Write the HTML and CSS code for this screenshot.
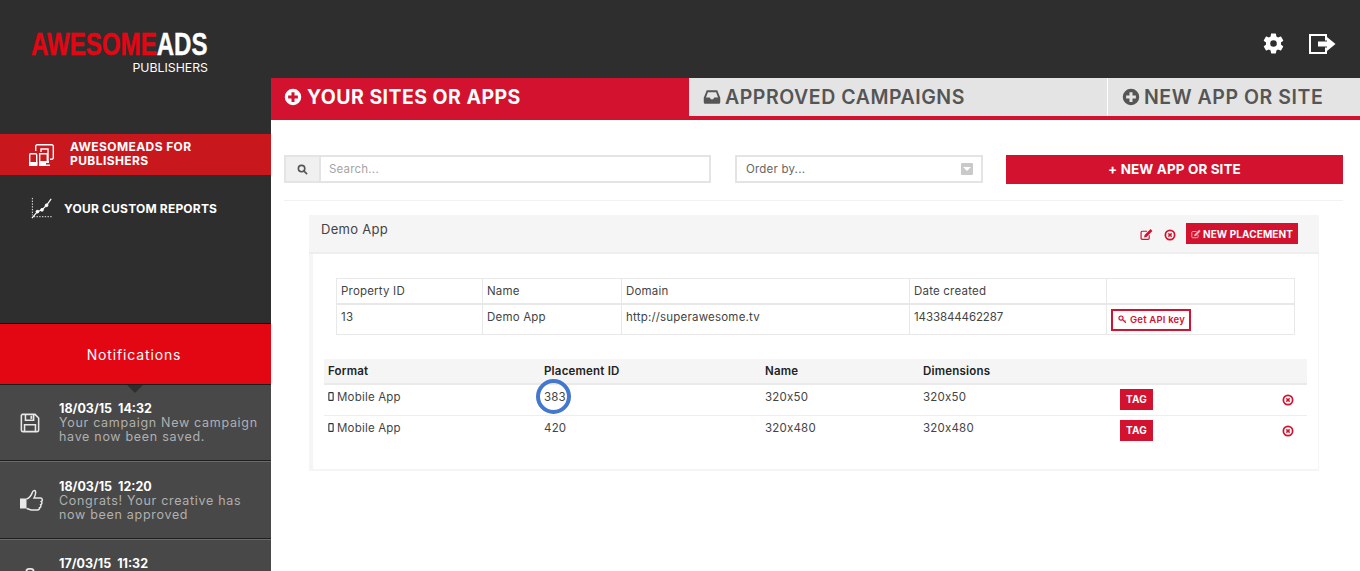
FILE: index.html
```html
<!DOCTYPE html>
<html lang="en">
<head>
<meta charset="utf-8">
<title>AwesomeAds Publishers</title>
<link rel="stylesheet" href="styles.css">
</head>
<body>
<svg class="defs" width="0" height="0" aria-hidden="true">
  <symbol id="i-plus-circle" viewBox="0 0 24 24"><path fill-rule="evenodd" d="M12 1a11 11 0 1 0 0 22 11 11 0 0 0 0-22zM10 5.500h4V10h4.500v4H14v4.500h-4V14H5.500v-4H10z"/></symbol>
  <symbol id="i-times-circle" viewBox="0 0 24 24"><path fill-rule="evenodd" d="M12 1a11 11 0 1 0 0 22 11 11 0 0 0 0-22zm0 3.500a7.500 7.500 0 1 1 0 15 7.500 7.500 0 0 1 0-15z"/><path d="M9.800 7.700 12 9.900l2.200-2.200 2.100 2.100-2.200 2.200 2.200 2.200-2.100 2.100-2.200-2.200-2.200 2.200-2.100-2.100 2.200-2.200-2.200-2.200z"/></symbol>
  <symbol id="i-edit" viewBox="0 0 24 24"><path d="M17 13.500V19a2 2 0 0 1-2 2H4a2 2 0 0 1-2-2V8a2 2 0 0 1 2-2h9" fill="none" stroke="currentColor" stroke-width="2.200"/><path d="M19.500 2 23 5.500 12 16.500l-4.500 1 1-4.500z"/></symbol>
  <symbol id="i-mobile" viewBox="0 0 12 20"><path fill-rule="evenodd" d="M2.500 0h7A2.500 2.500 0 0 1 12 2.500v15A2.500 2.500 0 0 1 9.500 20h-7A2.500 2.500 0 0 1 0 17.500v-15A2.500 2.500 0 0 1 2.500 0zM2.500 3v14h7V3z"/></symbol>
</svg>

<div class="app">
  <aside class="sidebar">
    <div class="brand">
      <div class="logo"><span class="logo-red">AWESOME</span><span class="logo-white">ADS</span></div>
      <div class="logo-sub">PUBLISHERS</div>
    </div>
    <nav class="side-nav">
      <a class="side-link active">
        <svg class="side-icon devices" viewBox="0 0 25 22" fill="none" stroke="#fff" stroke-width="1.400">
          <path d="M6.700 7V2.200A1.500 1.500 0 0 1 8.200.7h14.600a1.500 1.500 0 0 1 1.500 1.500v11.600a1.500 1.500 0 0 1-1.500 1.500H21"/>
          <path d="M12 8V5h7v12"/>
          <rect x=".7" y="9.700" width="7" height="11.600" rx="1"/>
          <path fill="#fff" stroke="none" d="M0 18h8.400v4H0zM10 17h10v2h-3v1.500h4V22h-11z"/>
          <path d="M10.700 9.700h7.600V18h-7.600z"/>
        </svg>
        <span>AWESOMEADS FOR<br>PUBLISHERS</span>
      </a>
      <a class="side-link reports">
        <svg class="side-icon chart" viewBox="0 0 24 24" fill="none" stroke="#fff">
          <path d="M1.500 1v19M3 21.500h20" stroke-dasharray="1.500 1.500" stroke-width="1"/>
          <path d="M1 23 7 16l5-2 5-5 5-7" stroke-width="1.300"/>
          <circle cx="7" cy="16" r="1.500" fill="#fff"/><circle cx="12" cy="14" r="1.500" fill="#fff"/><circle cx="17" cy="9" r="1.500" fill="#fff"/>
        </svg>
        <span>YOUR CUSTOM REPORTS</span>
      </a>
    </nav>
    <section class="notices">
      <h2 class="notices-title">Notifications</h2>
      <article class="notice">
        <svg class="notice-icon" viewBox="0 0 22 22" fill="none" stroke="#e8e8e8" stroke-width="1.700">
          <path d="M2.500 1.500h14l4 4V19a1.500 1.500 0 0 1-1.500 1.500H3A1.500 1.500 0 0 1 1.500 19V2.500z"/>
          <path d="M6 1.500V8h9V1.500M5 20.500V13h12v7.500"/>
          <path d="M11.500 3h2v3.500h-2z" fill="#e8e8e8" stroke="none"/>
        </svg>
        <div class="notice-text"><b>18/03/15&nbsp; 14:32</b><p>Your campaign New campaign have now been saved.</p></div>
      </article>
      <article class="notice">
        <svg class="notice-icon thumb" viewBox="0 0 24 22">
          <path fill="#e8e8e8" d="M0 9.500h6.500v10H0z"/>
          <path fill="none" stroke="#e8e8e8" stroke-width="1.500" d="M6.500 10c3-1 5-4 6-7 .3-1.500 2.500-2 3-.5.600 2-.5 4.500-1.500 6.500h6.500c2 0 2.500 3 .8 3.500 1 1 .6 3-.6 3.300.6 1.200 0 2.700-1.200 2.900.2 1.300-.6 2.300-2 2.300H11.500c-2 0-3-1.500-5-1.500"/>
        </svg>
        <div class="notice-text"><b>18/03/15&nbsp; 12:20</b><p>Congrats! Your creative has<br>now been approved</p></div>
      </article>
      <article class="notice">
        <svg class="notice-icon partial" viewBox="0 0 22 22" fill="none" stroke="#e8e8e8" stroke-width="2">
          <path d="M7 21V4a3 3 0 0 1 3-3h2a3 3 0 0 1 3 3v17"/>
        </svg>
        <div class="notice-text"><b>17/03/15&nbsp; 11:32</b></div>
      </article>
    </section>
  </aside>

  <main class="main">
    <header class="topbar">
      <svg class="top-icon gear" viewBox="0 0 24 24" fill="#fff"><path d="M19.140 12.940c.04-.3.06-.61.06-.94 0-.32-.02-.64-.07-.94l2.030-1.580a.49.49 0 0 0 .12-.61l-1.920-3.320a.488.488 0 0 0-.59-.22l-2.390.96c-.5-.38-1.030-.7-1.620-.94l-.36-2.540a.484.484 0 0 0-.48-.41h-3.840c-.24 0-.43.17-.47.41l-.36 2.540c-.59.24-1.130.57-1.620.94l-2.390-.96c-.22-.08-.47 0-.59.22L2.740 8.870c-.12.21-.08.47.12.61l2.030 1.580c-.05.3-.09.63-.09.94s.02.64.07.94l-2.030 1.580a.49.49 0 0 0-.12.61l1.920 3.320c.12.22.37.29.59.22l2.390-.96c.5.38 1.030.7 1.620.94l.36 2.540c.05.24.24.41.48.41h3.840c.24 0 .44-.17.47-.41l.36-2.540c.59-.24 1.130-.56 1.620-.94l2.390.96c.22.08.47 0 .59-.22l1.920-3.320c.12-.22.07-.47-.12-.61l-2.010-1.580zM12 15.200a3.200 3.200 0 1 1 0-6.400 3.200 3.200 0 0 1 0 6.400z"/></svg>
      <svg class="top-icon logout" viewBox="0 0 28 20" fill="#fff"><path d="M1 0h18v6.500h-2V2H3v16h14v-4.500h2V20H1z"/><path d="M10 7.500h9V3l8.500 7-8.500 7v-4.500h-9z"/></svg>
    </header>

    <nav class="tabs">
      <a class="tab tab-active"><svg class="tab-icon"><use href="#i-plus-circle"/></svg>YOUR SITES OR APPS</a>
      <a class="tab tab-mid">
        <svg class="tab-icon" viewBox="0 0 24 24"><path fill-rule="evenodd" d="M5 3h14l4 10v6a2 2 0 0 1-2 2H3a2 2 0 0 1-2-2v-6zm1.500 2.500L4 12.500h5l1.500 2.500h3l1.500-2.500h5l-2.500-7z"/></svg>APPROVED CAMPAIGNS</a>
      <a class="tab tab-last"><svg class="tab-icon"><use href="#i-plus-circle"/></svg>NEW APP OR SITE</a>
    </nav>

    <div class="content">
      <div class="toolbar">
        <div class="search">
          <span class="search-addon">
            <svg viewBox="0 0 24 24" fill="none" stroke="#555" stroke-width="3.500"><circle cx="10" cy="10" r="7"/><path d="m15.500 15.500 6.500 6.500"/></svg>
          </span>
          <span class="search-input">Search...</span>
        </div>
        <div class="order">
          <span>Order by...</span>
          <span class="order-caret"></span>
        </div>
        <a class="new-btn">+ NEW APP OR SITE</a>
      </div>

      <section class="panel">
        <header class="panel-head">
          <h3>Demo App</h3>
          <div class="panel-actions">
            <svg class="act-icon"><use href="#i-edit"/></svg>
            <svg class="act-icon"><use href="#i-times-circle"/></svg>
            <a class="placement-btn"><svg><use href="#i-edit"/></svg>NEW PLACEMENT</a>
          </div>
        </header>
        <div class="panel-body">
          <table class="prop-table">
            <colgroup><col class="p1"><col class="p2"><col class="p3"><col class="p4"><col></colgroup>
            <thead><tr><th>Property ID</th><th>Name</th><th>Domain</th><th>Date created</th><th></th></tr></thead>
            <tbody><tr>
              <td>13</td><td>Demo App</td><td>http://superawesome.tv</td><td class="stamp">1433844462287</td>
              <td><a class="key-btn">
                <svg viewBox="0 0 24 24" fill="none" stroke="currentColor" stroke-width="3"><circle cx="8" cy="8" r="5.500"/><path d="m12 12 9 9M17 17l3-2"/></svg>Get API key</a></td>
            </tr></tbody>
          </table>
          <table class="place-table">
            <colgroup><col class="c1"><col class="c2"><col class="c3"><col class="c4"><col class="c5"><col></colgroup>
            <thead><tr><th>Format</th><th>Placement ID</th><th>Name</th><th>Dimensions</th><th></th><th></th></tr></thead>
            <tbody>
              <tr>
                <td><svg class="mob"><use href="#i-mobile"/></svg>Mobile App</td>
                <td><span class="circled">383</span></td>
                <td>320x50</td><td>320x50</td>
                <td class="tag-cell"><a class="tag">TAG</a></td>
                <td class="del"><svg class="act-icon"><use href="#i-times-circle"/></svg></td>
              </tr>
              <tr>
                <td><svg class="mob"><use href="#i-mobile"/></svg>Mobile App</td>
                <td>420</td>
                <td>320x480</td><td>320x480</td>
                <td class="tag-cell"><a class="tag">TAG</a></td>
                <td class="del"><svg class="act-icon"><use href="#i-times-circle"/></svg></td>
              </tr>
            </tbody>
          </table>
        </div>
      </section>
    </div>
  </main>
</div>
</body>
</html>
```

FILE: styles.css
```css
*, *::before, *::after { box-sizing: border-box; }
html, body { margin: 0; height: 571px; overflow: hidden; }
body { font-family: Inter, "Liberation Sans", sans-serif; color: #333; background: #fff; }
.defs { position: absolute; }
a { display: block; }
h2, h3, p { margin: 0; font: inherit; }

.app { display: flex; height: 571px; overflow: hidden; }

/* sidebar */
.sidebar { width: 271px; flex: none; background: #2e2e2e; display: flex; flex-direction: column; height: 571px; overflow: hidden; }
.sidebar > * { flex: none; }
.brand { height: 134px; padding: 30px 0 0 31px; }
.logo { font-family: "Liberation Sans", sans-serif; font-weight: 700; font-size: 32px; line-height: 28px; white-space: nowrap; transform: scaleX(.752); transform-origin: 0 0; -webkit-text-stroke: .4px currentColor; }
.logo-red { color: #e30613; }
.logo-white { color: #fff; }
.logo-sub { width: 177px; text-align: right; color: #fff; font-size: 12.300px; line-height: 15px; margin-top: 2px; }
.side-nav { height: 189px; }
.side-link { display: flex; align-items: center; color: #fff; font-weight: 700; font-size: 12px; line-height: 14px; }
.side-link.active { height: 41px; background: #c9171e; padding: 0 0 0 29px; gap: 16px; letter-spacing: .4px; }
.side-link.active span { margin-top: -1px; }
.side-link.reports { height: 24px; margin-top: 21px; padding-left: 31px; gap: 11px; letter-spacing: .2px; }
.side-link.reports span { margin-top: 2px; }
.side-icon { flex: none; }
.devices { width: 25px; height: 22px; }
.chart { width: 22px; height: 22px; }

.notices { color: #fff; }
.notices-title { height: 62px; background: #e30613; border-top: 1px solid #111; border-bottom: 1px solid #1d1d1d; padding-right: 3px; text-align: center; font-size: 14px; line-height: 61px; letter-spacing: .85px; font-weight: 400; position: relative; }
.notices-title::after { content: ""; position: absolute; left: 127px; bottom: -9px; width: 16px; height: 8px; border: 8px solid transparent; border-bottom: 0; border-top-color: #2e2e2e; }
.notice { height: 78px; background: #484848; border-bottom: 1px solid #1f1f1f; border-top: 1px solid #6a6a6a; display: flex; align-items: center; padding-left: 20px; gap: 19px; }
.notice:first-of-type { height: 76px; border-top: 0; }
.notice-icon { width: 20px; height: 20px; flex: none; }
.notice-icon.thumb { width: 24px; height: 22px; margin-right: -4px; }
.notice-text { width: 205px; align-self: flex-start; margin-top: 17px; font-size: 12.500px; line-height: 14px; }
.notice:nth-of-type(2) .notice-text { margin-top: 18px; }
.notice-text b { display: block; font-weight: 700; font-size: 12.500px; }
.notice-text p { color: #b0b0b0; letter-spacing: .7px; }

/* main */
.main { flex: 1; min-width: 0; display: flex; flex-direction: column; }
.topbar { height: 78px; flex: none; background: #2e2e2e; display: flex; justify-content: flex-end; align-items: center; gap: 22px; padding: 9px 24px 0 0; }
.gear { width: 25px; height: 25px; }
.logout { width: 28px; height: 20px; }

.tabs { height: 42px; flex: none; display: flex; border-bottom: 4px solid #d2122e; background: #d2122e; }
.tab { display: flex; align-items: center; font-weight: 600; font-size: 19.500px; white-space: nowrap; height: 38px; }
.tab-icon { width: 18px; height: 18px; flex: none; margin-right: 4px; fill: currentColor; }
.tab-active { width: 417px; padding-left: 13px; color: #fff; background: #d2122e; font-weight: 700; letter-spacing: .45px; }
.tab-active .tab-icon { margin-right: 5px; }
.tab-mid { width: 418px; margin-left: 1px; padding-left: 14px; color: #555; background: #e4e4e4; letter-spacing: .55px; }
.tab-last { flex: 1; border-left: 1px solid #fff; padding-left: 14px; color: #555; background: #e4e4e4; letter-spacing: .55px; }

.content { flex: 1; padding: 35px 17px 0 13px; }
.toolbar { display: flex; height: 46px; border-bottom: 1px solid #f2f2f2; }
.search { width: 427px; height: 28px; display: flex; border: 2px solid #e4e4e4; }
.search-addon { width: 35px; background: #f0f0f0; border-right: 2px solid #e4e4e4; display: flex; align-items: center; justify-content: center; }
.search-addon svg { width: 11px; height: 11px; }
.search-input { padding-left: 8px; font-size: 11.500px; line-height: 24px; color: #a5a5a5; letter-spacing: .2px; }
.order { width: 248px; height: 28px; margin-left: 24px; border: 2px solid #e4e4e4; display: flex; align-items: center; justify-content: space-between; padding: 0 8px 0 9px; font-size: 11.500px; color: #666; letter-spacing: .2px; }
.order-caret { width: 12px; height: 12px; background: #c9c9c9; border-radius: 1px; position: relative; }
.order-caret::after { content: ""; position: absolute; left: 2px; top: 4px; width: 8px; height: 4px; border: 4px solid transparent; border-bottom: 0; border-top-color: #fff; }
.new-btn { width: 337px; height: 29px; margin-left: 23px; background: #d2122e; color: #fff; font-weight: 700; font-size: 13.500px; letter-spacing: .1px; line-height: 29px; text-align: center; white-space: nowrap; }

.panel { margin: 14px 24px 0 25px; height: 256px; border: solid #f5f5f5; border-width: 0 1px 2px 4px; }
.panel-head { height: 39px; margin-left: -4px; margin-right: -1px; background: #f5f5f5; border-bottom: 2px solid #eee; display: flex; justify-content: space-between; padding: 8px 21px 0 12px; }
.panel-head h3 { font-size: 13px; line-height: 14px; margin-top: -1px; font-weight: 400; color: #444; letter-spacing: .3px; }
.panel-actions { display: flex; align-items: flex-start; }
.act-icon { width: 12px; height: 12px; fill: #d2122e; color: #d2122e; display: block; }
.panel-actions .act-icon { margin-top: 5px; margin-right: 11px; width: 13px; height: 13px; }
.panel-actions .act-icon + .act-icon { margin-top: 6px; margin-right: 10px; width: 12px; height: 12px; }
.placement-btn { display: flex; align-items: center; height: 21px; padding: 0 5px; background: #d2122e; color: #fff; font-weight: 700; font-size: 10px; letter-spacing: .1px; white-space: nowrap; }
.placement-btn svg { width: 10px; height: 10px; fill: #f1b5bf; color: #f1b5bf; margin-right: 2px; }

table { border-collapse: collapse; table-layout: fixed; font-size: 11.500px; color: #444; letter-spacing: .2px; }
th, td { font-weight: 400; text-align: left; }
.prop-table { width: 959px; margin: 24px 0 0 23px; }
.prop-table th, .prop-table td { border: 1px solid #e8e8e8; padding: 0 4px; }
.prop-table thead tr { height: 25px; }
.prop-table thead th { border-bottom-width: 2px; }
.prop-table tbody tr { height: 31px; }
.prop-table td { vertical-align: top; padding-top: 5px; line-height: 14px; }
.prop-table .stamp { letter-spacing: -.1px; }
.p1 { width: 146px; }
.p2 { width: 139px; }
.p3 { width: 288px; }
.p4 { width: 197px; }
.key-btn { display: flex; align-items: center; width: 80px; height: 22px; margin-top: -1px; padding-left: 5px; border: 2px solid #d2122e; color: #d2122e; font-size: 9.500px; font-weight: 600; white-space: nowrap; }
.key-btn svg { width: 9px; height: 9px; margin-right: 3px; }

.place-table { width: 983px; margin: 24px 0 0 11px; }
.place-table thead tr { height: 25px; background: #f5f5f5; }
.place-table th { font-weight: 600; color: #222; padding: 0 4px; border-bottom: 2px solid #eaeaea; }
.place-table tbody tr { height: 31px; border-bottom: 1px solid #eee; }
.place-table tbody tr:last-child { border-bottom: 0; height: 32px; }
.place-table td { padding: 5px 4px 0; line-height: 14px; vertical-align: top; }
.c1 { width: 216px; }
.c2 { width: 221px; }
.c3 { width: 158px; }
.c4 { width: 197px; }
.c5 { width: 162px; }
.mob { width: 6px; height: 9px; margin-right: 3px; fill: #333; display: inline-block; }
.circled { position: relative; display: inline-block; }
.circled::after { content: ""; position: absolute; left: -8px; top: -11px; width: 35px; height: 35px; border: 4px solid #4478cf; border-radius: 50%; }
.place-table .tag-cell { padding-top: 4px; }
.tag { width: 33px; height: 21px; background: #d2122e; color: #fff; font-weight: 700; font-size: 10px; line-height: 21px; text-align: center; }
.place-table .del { padding-top: 9px; }
```
